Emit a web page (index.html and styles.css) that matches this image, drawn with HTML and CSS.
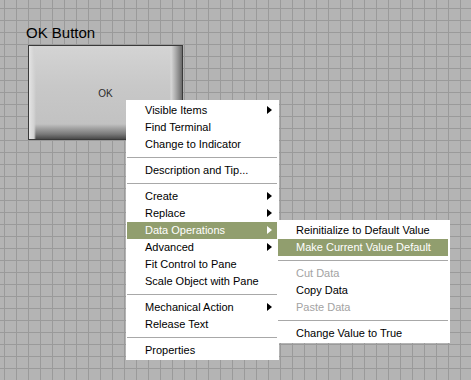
FILE: index.html
```html
<!DOCTYPE html>
<html>
<head>
<meta charset="utf-8">
<title>OK Button</title>
<link rel="stylesheet" href="styles.css">
</head>
<body>
<div class="panel">
  <div class="label">OK Button</div>
  <div class="button">
    <div class="button-face">
      <span class="button-text">OK</span>
    </div>
  </div>
</div>

<div class="menu main-menu">
  <div class="item sub">Visible Items</div>
  <div class="item">Find Terminal</div>
  <div class="item">Change to Indicator</div>
  <div class="sep"></div>
  <div class="item">Description and Tip...</div>
  <div class="sep"></div>
  <div class="item sub">Create</div>
  <div class="item sub">Replace</div>
  <div class="item sub active">Data Operations</div>
  <div class="item sub">Advanced</div>
  <div class="item">Fit Control to Pane</div>
  <div class="item">Scale Object with Pane</div>
  <div class="sep"></div>
  <div class="item sub">Mechanical Action</div>
  <div class="item">Release Text</div>
  <div class="sep"></div>
  <div class="item">Properties</div>
</div>

<div class="menu sub-menu">
  <div class="item">Reinitialize to Default Value</div>
  <div class="item active">Make Current Value Default</div>
  <div class="sep"></div>
  <div class="item disabled">Cut Data</div>
  <div class="item">Copy Data</div>
  <div class="item disabled">Paste Data</div>
  <div class="sep"></div>
  <div class="item">Change Value to True</div>
</div>
</body>
</html>
```

FILE: styles.css
```css
html, body {
  margin: 0;
  padding: 0;
  width: 100%;
  height: 100%;
}

body {
  background-color: #b4b4b4;
  background-image:
    linear-gradient(to right, #9a9a9a 1px, transparent 1px),
    linear-gradient(to bottom, #9a9a9a 1px, transparent 1px);
  background-size: 12px 12px;
  background-position: 4px 8px;
  font-family: "Liberation Sans", Arial, sans-serif;
  position: relative;
  overflow: hidden;
}

.panel {
  padding: 24px 0 0 26px;
}

.label {
  font-size: 15px;
  line-height: 17px;
  height: 17px;
  color: #000;
  margin-bottom: 4px;
}

.button {
  margin-left: 2px;
  width: 155px;
  height: 95px;
  box-sizing: border-box;
  border: 1px solid #3a3a3a;
  background: #c6c6c6;
}

.button-face {
  width: 100%;
  height: 100%;
  display: flex;
  align-items: center;
  justify-content: center;
  box-sizing: border-box;
  padding-top: 2px;
  background:
    linear-gradient(to right, #e4e4e4 0, #d2d2d2 5px, transparent 7px),
    linear-gradient(to right, transparent 141px, #d8d8d8 142px, #a8a8a8 147px, #6a6a6a 153px),
    linear-gradient(to bottom, #d4d4d4 0, #c8c8c8 40px, #c2c2c2 78px, #a4a4a4 82px, #7a7a7a 88px, #4a4a4a 93px);
}

.button-text {
  font-size: 10px;
  color: #2a2a2a;
}

.menu {
  position: absolute;
  background: #fff;
  box-sizing: border-box;
  padding: 2px 2px 1px 1px;
  font-size: 11px;
  color: #000;
}

.main-menu {
  left: 126px;
  top: 100px;
  width: 153px;
}

.sub-menu {
  left: 277px;
  top: 220px;
  width: 173px;
}

.item {
  position: relative;
  height: 17px;
  line-height: 17px;
  padding-left: 18px;
  white-space: nowrap;
}

.item.active {
  background: #919e6e;
  color: #fff;
}

.item.disabled {
  color: #a3a3a3;
}

.item.sub::after {
  content: "";
  position: absolute;
  right: 5px;
  top: 4px;
  width: 0;
  height: 0;
  border-left: 5px solid #000;
  border-top: 4.5px solid transparent;
  border-bottom: 4.5px solid transparent;
}

.item.sub.active::after {
  border-left-color: #fff;
}

.sep {
  height: 9px;
  box-sizing: border-box;
  padding-top: 4px;
}

.sep::before {
  content: "";
  display: block;
  height: 1px;
  background: #a8a8a8;
}
```
